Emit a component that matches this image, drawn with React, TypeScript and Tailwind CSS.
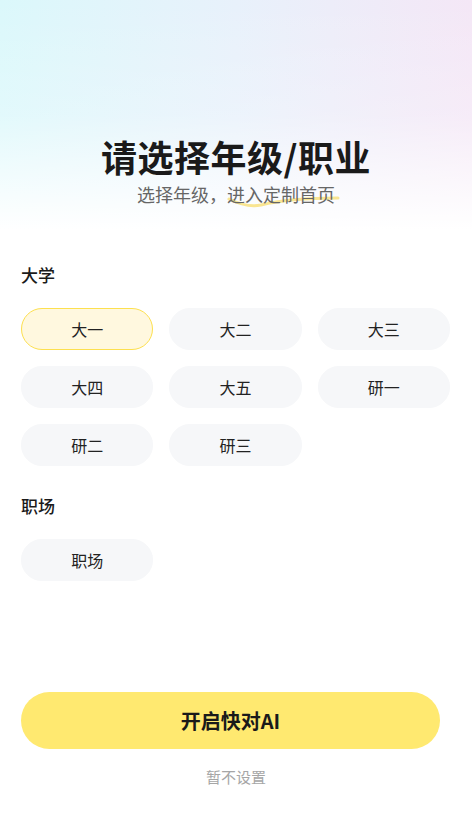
import React, { useState } from "react";

const groups = [
  { title: "大学", items: ["大一", "大二", "大三", "大四", "大五", "研一", "研二", "研三"] },
  { title: "职场", items: ["职场"] },
];

const font = { fontFamily: '"Noto Sans CJK SC", "Noto Sans", sans-serif' };

export default function App() {
  const [selected, setSelected] = useState("大一");
  return (
    <div
      className="relative w-[472px] h-[839px] overflow-hidden bg-white text-[#1a1a1a]"
      style={font}
    >
      {/* soft top gradient */}
      <div className="absolute inset-x-0 top-0 h-[230px] bg-gradient-to-r from-[#dbf8fb] via-[#e8f1fb] to-[#f4e7f6]" />
      <div className="absolute inset-x-0 top-0 h-[230px] bg-gradient-to-b from-transparent via-white/20 to-white" />

      <div className="relative flex flex-col h-full">
        <div className="flex flex-col items-center pt-[130px]">
          <h1 className="text-[36px] leading-[52px] font-bold tracking-[0.5px]">请选择年级/职业</h1>
          <div className="relative mt-[-1px] text-[18px] leading-[26px] text-[#666]">
            <svg
              className="absolute left-[90px] top-[13px]"
              width="114"
              height="16"
              viewBox="0 0 114 16"
              fill="none"
            >
              <path
                d="M2 5 C 12 10, 24 13, 34 11 C 50 7, 80 4, 111 4"
                stroke="#f9e592"
                strokeWidth="3"
                strokeLinecap="round"
              />
            </svg>
            <span className="relative">选择年级，进入定制首页</span>
          </div>
        </div>

        <div className="px-[21px] pt-[56px] flex flex-col gap-[28px]">
          {groups.map((g) => (
            <div key={g.title}>
              <div className="text-[17px] leading-[24px] font-medium">{g.title}</div>
              <div className="grid grid-cols-3 gap-x-[16px] gap-y-[16px] mt-[21px] pr-[1px]">
                {g.items.map((it) => (
                  <button
                    key={it}
                    onClick={() => setSelected(it)}
                    className={
                      selected === it
                        ? "h-[42px] rounded-full border border-[#fde04f] bg-[#fff8df] text-[16px] text-[#222]"
                        : "h-[42px] rounded-full border border-[#f6f7f9] bg-[#f6f7f9] text-[16px] text-[#222]"
                    }
                  >
                    {it}
                  </button>
                ))}
              </div>
            </div>
          ))}
        </div>

        <div className="mt-auto pb-[47px] flex flex-col">
          <div className="pl-[21px] pr-[32px]">
            <button className="w-full h-[57px] rounded-full bg-[#ffe970] text-[20px] font-bold text-[#1a1a1a]">
              开启快对AI
            </button>
          </div>
          <div className="mt-[13px] text-center text-[15px] leading-[30px] text-[#a6a6a6]">暂不设置</div>
        </div>
      </div>
    </div>
  );
}
